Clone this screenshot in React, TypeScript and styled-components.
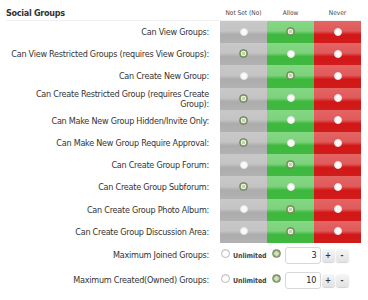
import React from 'react';
import styled, { createGlobalStyle } from 'styled-components';

type Choice = 'notset' | 'allow' | 'never';

interface Permission {
  label: string;
  value: Choice;
}

const permissions: Permission[] = [
  { label: 'Can View Groups:', value: 'allow' },
  { label: 'Can View Restricted Groups (requires View Groups):', value: 'notset' },
  { label: 'Can Create New Group:', value: 'allow' },
  { label: 'Can Create Restricted Group (requires Create Group):', value: 'notset' },
  { label: 'Can Make New Group Hidden/Invite Only:', value: 'notset' },
  { label: 'Can Make New Group Require Approval:', value: 'notset' },
  { label: 'Can Create Group Forum:', value: 'allow' },
  { label: 'Can Create Group Subforum:', value: 'notset' },
  { label: 'Can Create Group Photo Album:', value: 'allow' },
  { label: 'Can Create Group Discussion Area:', value: 'allow' },
];

const limits = [
  { label: 'Maximum Joined Groups:', value: 3 },
  { label: 'Maximum Created(Owned) Groups:', value: 10 },
];

const GlobalStyle = createGlobalStyle`
  body {
    margin: 0;
    background: #fff;
    font-family: "DejaVu Sans Condensed", "DejaVu Sans", sans-serif;
    color: #333;
  }
`;

const Panel = styled.div`
  width: 368px;
  padding: 0 7px 0 6px;
  box-sizing: border-box;
`;

const HeaderRow = styled.div`
  display: grid;
  grid-template-columns: 1fr 47px 47px 47px;
  height: 21px;
  align-items: center;
  border-bottom: 1px solid #f0f0f0;
  box-sizing: border-box;
`;

const Title = styled.div`
  font-size: 9px;
  font-weight: bold;
  letter-spacing: -0.3px;
  color: #333;
  padding-top: 6px;
`;

const ColumnHead = styled.div`
  font-size: 6.5px;
  color: #444;
  text-align: center;
  padding-top: 6px;
  white-space: nowrap;
`;

const PermRow = styled.div`
  display: grid;
  grid-template-columns: 1fr 47px 47px 47px;
  height: 22.2px;
`;

const Label = styled.div`
  display: flex;
  align-items: center;
  justify-content: flex-end;
  text-align: right;
  padding-right: 11px;
  font-size: 9px;
  letter-spacing: -0.25px;
  line-height: 10px;
  color: #333;
`;

const cellGradients: Record<Choice, string> = {
  notset: 'linear-gradient(to bottom, #c8c8c8 0%, #c4c4c4 45%, #acacac 62%, #b2b2b2 100%)',
  allow: 'linear-gradient(to bottom, #84d884 0%, #7ed27e 45%, #3db83d 62%, #42b842 100%)',
  never: 'linear-gradient(to bottom, #e46464 0%, #e05a5a 45%, #d21616 62%, #d01c1c 100%)',
};

const Cell = styled.div<{ $kind: Choice }>`
  display: flex;
  align-items: center;
  justify-content: center;
  background: ${({ $kind }) => cellGradients[$kind]};
`;

const Dot = styled.span<{ $checked: boolean }>`
  width: ${({ $checked }) => ($checked ? 9 : 8)}px;
  height: ${({ $checked }) => ($checked ? 9 : 8)}px;
  border-radius: 50%;
  box-sizing: border-box;
  background: ${({ $checked }) =>
    $checked
      ? 'radial-gradient(circle, #bcd9a4 0 1.5px, #eef5e8 2px 2.6px, #8ea374 3px)'
      : '#fafafa'};
  border: 1px solid ${({ $checked }) => ($checked ? '#73845d' : '#e4e4e4')};
  margin-top: -1px;
`;

const LimitRow = styled.div`
  display: grid;
  grid-template-columns: 1fr auto;
  height: 25px;
  align-items: center;
`;

const LimitControls = styled.div`
  display: flex;
  align-items: center;
  width: 141px;
  padding-left: 1px;
  box-sizing: border-box;
`;

const RadioRing = styled.span<{ $checked: boolean }>`
  width: 9px;
  height: 9px;
  border-radius: 50%;
  box-sizing: border-box;
  margin-top: -3px;
  flex-shrink: 0;
  border: 1px solid ${({ $checked }) => ($checked ? '#7d8f68' : '#b8b8b8')};
  background: ${({ $checked }) =>
    $checked ? 'radial-gradient(circle, #cfe3bb 0 2px, #93aa7c 2.5px)' : '#fff'};
  box-shadow: inset 0 1px 1px rgba(0, 0, 0, 0.08);
`;

const Unlimited = styled.span`
  font-size: 7px;
  font-weight: bold;
  letter-spacing: -0.1px;
  color: #444;
  margin: 2px 5px 0 3px;
`;

const NumberBox = styled.div`
  width: 36px;
  height: 17px;
  margin-left: 4px;
  border: 1px solid #d8d8d8;
  border-radius: 3px;
  box-sizing: border-box;
  background: #fff;
  font-size: 9px;
  color: #222;
  display: flex;
  align-items: center;
  justify-content: flex-end;
  padding-right: 3px;
`;

const StepButton = styled.span`
  width: 13px;
  height: 13px;
  margin-left: 1px;
  border-radius: 3px;
  background: linear-gradient(to bottom, #f6f6f6, #e2e2e2);
  box-shadow: 0 1px 1px rgba(0, 0, 0, 0.18);
  font-size: 8px;
  font-weight: bold;
  color: #333;
  display: flex;
  align-items: center;
  justify-content: center;
`;

const App: React.FC = () => {
  return (
    <Panel>
      <GlobalStyle />
      <HeaderRow>
        <Title>Social Groups</Title>
        <ColumnHead>Not Set (No)</ColumnHead>
        <ColumnHead>Allow</ColumnHead>
        <ColumnHead>Never</ColumnHead>
      </HeaderRow>
      {permissions.map(p => (
        <PermRow key={p.label}>
          <Label>{p.label}</Label>
          {(['notset', 'allow', 'never'] as Choice[]).map(kind => (
            <Cell key={kind} $kind={kind}>
              <Dot $checked={p.value === kind} />
            </Cell>
          ))}
        </PermRow>
      ))}
      {limits.map(l => (
        <LimitRow key={l.label}>
          <Label>{l.label}</Label>
          <LimitControls>
            <RadioRing $checked={false} />
            <Unlimited>Unlimited</Unlimited>
            <RadioRing $checked />
            <NumberBox>{l.value}</NumberBox>
            <StepButton>+</StepButton>
            <StepButton>-</StepButton>
          </LimitControls>
        </LimitRow>
      ))}
    </Panel>
  );
};

export default App;
